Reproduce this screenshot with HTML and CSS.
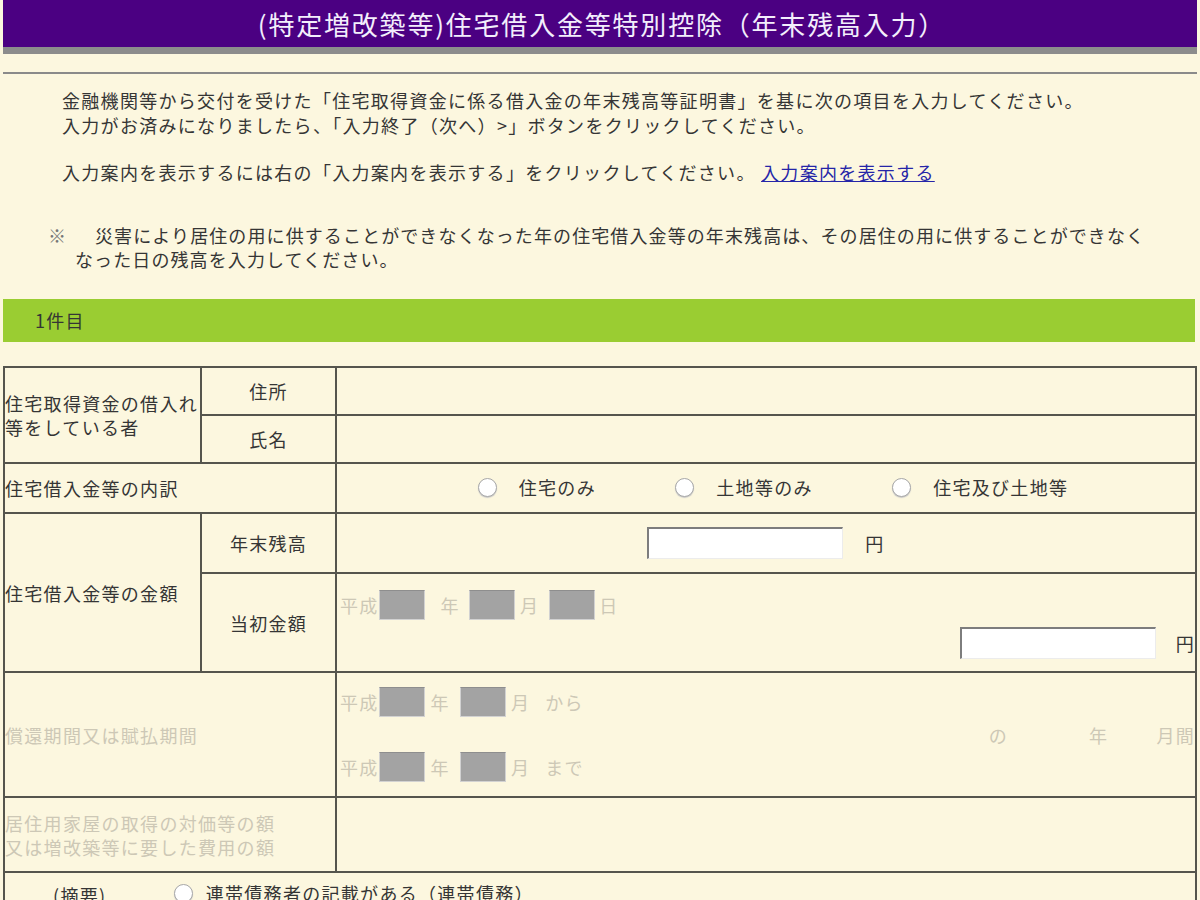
FILE: index.html
```html
<!DOCTYPE html>
<html>
<head lang="ja">
    <meta charset="UTF-8">
    <link rel="stylesheet" href="styles.css">
    <title>住宅借入金等特別控除（年末残高入力）</title>
</head>
<body>
<div class="titleBar">
    <h1>(特定増改築等)住宅借入金等特別控除（年末残高入力）</h1>
</div>
<hr class="rule">

<div class="guide">
    <p>金融機関等から交付を受けた「住宅取得資金に係る借入金の年末残高等証明書」を基に次の項目を入力してください。<br>入力がお済みになりましたら、「入力終了（次へ）&gt;」ボタンをクリックしてください。</p>
    <p class="gap">入力案内を表示するには右の「入力案内を表示する」をクリックしてください。 <a href="#">入力案内を表示する</a></p>
    <p class="note"><span class="mark">※</span>災害により居住の用に供することができなくなった年の住宅借入金等の年末残高は、その居住の用に供することができなく<br>なった日の残高を入力してください。</p>
</div>

<div class="sectionBar">1件目</div>

<table class="form">
    <colgroup>
        <col class="c1">
        <col class="c2">
        <col class="c3">
    </colgroup>
    <tr class="r48">
        <td rowspan="2">住宅取得資金の借入れ<br>等をしている者</td>
        <td class="center">住所</td>
        <td></td>
    </tr>
    <tr class="r48">
        <td class="center">氏名</td>
        <td></td>
    </tr>
    <tr class="r50">
        <td colspan="2">住宅借入金等の内訳</td>
        <td class="center choices">
            <label class="choice"><input type="radio" name="kind">住宅のみ</label>
            <label class="choice"><input type="radio" name="kind">土地等のみ</label>
            <label class="choice"><input type="radio" name="kind">住宅及び土地等</label>
        </td>
    </tr>
    <tr class="r60">
        <td rowspan="2">住宅借入金等の金額</td>
        <td class="center">年末残高</td>
        <td class="center"><input class="amount" type="text"><span class="yen">円</span></td>
    </tr>
    <tr class="r99">
        <td class="center">当初金額</td>
        <td class="top">
            <div class="dateLine dim">
                <span>平成</span><input class="dateBox" disabled>
                <span class="m16">年</span><input class="dateBox m9" disabled>
                <span class="m5">月</span><input class="dateBox m10" disabled>
                <span class="m4">日</span>
            </div>
            <div class="amountLine"><input class="amount" type="text"><span class="yen">円</span></div>
        </td>
    </tr>
    <tr class="r125">
        <td colspan="2" class="dim">償還期間又は賦払期間</td>
        <td>
            <div class="period dim">
                <div class="periodDates">
                    <div class="dateLine">
                        <span>平成</span><input class="dateBox" disabled>
                        <span class="m6">年</span><input class="dateBox m10" disabled>
                        <span class="m5">月</span><span class="m15">から</span>
                    </div>
                    <div class="dateLine second">
                        <span>平成</span><input class="dateBox" disabled>
                        <span class="m6">年</span><input class="dateBox m10" disabled>
                        <span class="m5">月</span><span class="m15">まで</span>
                    </div>
                </div>
                <span>の</span><span class="m81">年</span><span class="m48">月間</span>
            </div>
        </td>
    </tr>
    <tr class="r75">
        <td colspan="2" class="dim">居住用家屋の取得の対価等の額<br>又は増改築等に要した費用の額</td>
        <td></td>
    </tr>
    <tr class="r60">
        <td colspan="3" class="summary">
            <span class="summaryLabel">(摘要)</span>
            <label class="choice"><input type="radio" name="joint">連帯債務者の記載がある（連帯債務）</label>
        </td>
    </tr>
</table>
</body>
</html>
```

FILE: styles.css
```css
html, body {
    overflow: hidden;
}
body {
    margin: 0;
    background: #fcf7df;
    color: #353535;
    font-family: "Noto Sans CJK JP", "Noto Sans", sans-serif;
    font-size: 18px;
    letter-spacing: 1.3px;
    line-height: 25px;
}
.titleBar {
    margin: 0 3px;
    height: 47px;
    background: #4b0082;
    border-bottom: 7px solid #8c8c8c;
}
.titleBar h1 {
    margin: 0;
    padding-left: 4px;
    font-size: 26px;
    font-weight: normal;
    letter-spacing: 1.8px;
    line-height: 48px;
    color: #f3eefc;
    text-align: center;
}
.rule {
    margin: 18px 3px 0 3px;
    border: 0;
    border-top: 2px solid #8a8a8a;
    height: 0;
}
.guide {
    padding: 14px 0 0 62px;
}
.guide p {
    margin: 0;
}
.guide .gap {
    margin-top: 22px;
}
.guide a {
    color: #2525a8;
}
.guide .note {
    margin: 38px 0 0 -14px;
    padding-left: 27px;
    text-indent: -27px;
    line-height: 24px;
    letter-spacing: 1.1px;
}
.mark {
    display: inline-block;
    width: 47px;
    text-indent: 0;
    color: #777;
}
.sectionBar {
    margin: 28px 5px 0 3px;
    height: 43px;
    padding-left: 32px;
    background: #9acd32;
    line-height: 43px;
}
.form {
    margin: 24px 0 0 3px;
    width: 1194px;
    table-layout: fixed;
    border-collapse: separate;
    border-spacing: 0;
    border-top: 2px solid #55554d;
    border-left: 2px solid #55554d;
}
.c1 { width: 197px; }
.c2 { width: 135px; }
.form td {
    padding: 0;
    border-right: 2px solid #55554d;
    border-bottom: 2px solid #55554d;
    line-height: 24px;
    vertical-align: middle;
    white-space: nowrap;
}
.r48 { height: 48px; }
.r50 { height: 50px; }
.r60 { height: 60px; }
.r99 { height: 99px; }
.r125 { height: 125px; }
.r75 { height: 75px; }
.form td.center {
    text-align: center;
}
.form td.choices {
    padding-left: 14px;
}
.form td.top {
    vertical-align: top;
    padding: 16px 0 0 3px;
}
.dim {
    color: #cdc8b6;
}
.choice {
    display: inline-flex;
    align-items: center;
    margin: 0 37px;
}
.choice input {
    appearance: none;
    margin: 0 22px 0 0;
    width: 19px;
    height: 19px;
    border-radius: 50%;
    border: 1px solid #a8a8a8;
    background: #fff;
    box-shadow: 0 1px 1px #c8c8c8;
}
.amount {
    box-sizing: border-box;
    width: 196px;
    height: 32px;
    margin: 0;
    background: #fff;
    border: 1px solid #ececec;
    border-top: 2px solid #7d7d7d;
    border-left: 2px solid #7d7d7d;
    vertical-align: middle;
}
.yen {
    margin-left: 22px;
    vertical-align: middle;
}
.amountLine {
    margin-top: 7px;
    text-align: right;
}
.amountLine .yen {
    margin-left: 20px;
}
.dateLine {
    display: flex;
    align-items: center;
    height: 30px;
}
.dateBox {
    box-sizing: border-box;
    width: 46px;
    height: 30px;
    margin: 0;
    padding: 0;
    background: #a3a3a3;
    border: 1px solid #d2d2d2;
    border-top-color: #8e8e8e;
}
.m4 { margin-left: 4px; }
.m5 { margin-left: 5px; }
.m6 { margin-left: 6px; }
.m9 { margin-left: 9px; }
.m10 { margin-left: 10px; }
.m15 { margin-left: 15px; }
.m16 { margin-left: 16px; }
.m48 { margin-left: 48px; }
.m81 { margin-left: 81px; }
.period {
    display: flex;
    align-items: center;
    padding-left: 3px;
}
.periodDates {
    width: 650px;
}
.dateLine.second {
    margin-top: 35px;
}
.summary {
    vertical-align: top !important;
    padding: 8px 0 0 48px !important;
}
.summaryLabel {
    margin-right: 62px;
}
.summary .choice {
    margin: 0;
}
.summary .choice input {
    margin-right: 13px;
}
```
